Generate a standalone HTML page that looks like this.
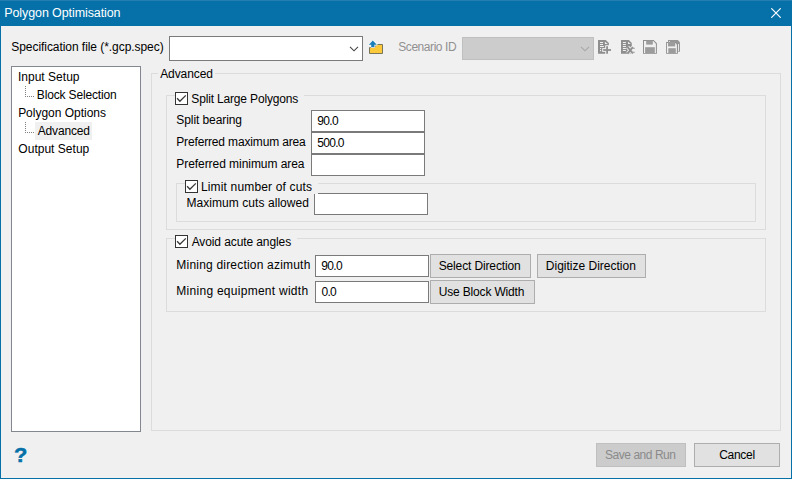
<!DOCTYPE html>
<html><head><meta charset="utf-8">
<style>
html,body{margin:0;padding:0;}
body{width:792px;height:479px;position:relative;overflow:hidden;background:#f0f0f0;font-family:"Liberation Sans",sans-serif;font-size:12px;color:#000;}
.abs{position:absolute;}
.t{position:absolute;white-space:nowrap;line-height:14px;font-size:12px;}
.in{position:absolute;background:#fff;border:1px solid #7a7a7a;box-sizing:border-box;}
.grp{position:absolute;border:1px solid #dcdcdc;box-sizing:border-box;}
.gap{position:absolute;background:#f0f0f0;height:3px;}
.cb{position:absolute;width:13px;height:13px;box-sizing:border-box;border:1px solid #333;background:#fff;}
.btn{position:absolute;box-sizing:border-box;border:1px solid #adadad;background:#e1e1e1;}
.dv{position:absolute;width:1px;background:repeating-linear-gradient(to bottom,#808080 0 1px,transparent 1px 2px);}
.dh{position:absolute;height:1px;background:repeating-linear-gradient(to right,#808080 0 1px,transparent 1px 2px);}
</style></head><body>
<div class="abs" style="left:0;top:0;width:792px;height:26px;background:#0571a8"></div>
<div class="abs" style="left:0;top:26px;width:1px;height:453px;background:#0571a8"></div>
<div class="abs" style="left:791px;top:26px;width:1px;height:453px;background:#0571a8"></div>
<div class="abs" style="left:0;top:478px;width:792px;height:1px;background:#0571a8"></div>
<div class="abs" style="left:0;top:0;width:792px;height:1px;background:#2480b2"></div>
<svg class="abs" style="left:771px;top:8px" width="10" height="10" viewBox="0 0 10 10"><path d="M0.3 0.3L9.7 9.7M9.7 0.3L0.3 9.7" stroke="#fff" stroke-width="1.15" fill="none"/></svg>

<!-- spec combobox -->
<div class="in" style="left:169px;top:36px;width:194px;height:25px">
<svg class="abs" style="left:179px;top:9px" width="10" height="6" viewBox="0 0 10 6"><path d="M1 0.8L5 4.8L9 0.8" stroke="#444" stroke-width="1.1" fill="none"/></svg>
</div>
<!-- folder icon -->
<svg class="abs" style="left:368px;top:40px" width="17" height="15" viewBox="0 0 17 15"><path d="M1.5 7.5H6.5L8.5 4.5H14.5V13.5H1.5Z" fill="#fcc93a" stroke="#7a7559" stroke-width="1"/><path d="M4.8 0.6L8.8 4.7H6.4V7H3.2V4.7H0.8Z" fill="#f8f8f8" stroke="#f8f8f8" stroke-width="1.6" stroke-linejoin="round"/><path d="M4.8 0.6L8.8 4.7H6.4V7H3.2V4.7H0.8Z" fill="#1a7fb8"/></svg>
<!-- scenario combobox -->
<div class="abs" style="left:462px;top:37px;width:132px;height:23px;background:#cccccc;border:1px solid #bfbfbf;box-sizing:border-box">
<svg class="abs" style="left:117px;top:8px" width="10" height="6" viewBox="0 0 10 6"><path d="M1 0.8L5 4.8L9 0.8" stroke="#a8a8a8" stroke-width="1.1" fill="none"/></svg>
</div>
<!-- toolbar icons -->
<svg class="abs" style="left:598px;top:40px" width="14" height="14" viewBox="0 0 14 14"><path d="M0 0H7.7L10.9 2.9V13.8H0Z" fill="#8e8e8e"/><path d="M6.9 1.8V3.9H9.9Z" fill="#ececec"/><g fill="#f0f0f0"><rect x="2" y="2" width="3" height="1"/><rect x="2" y="4" width="3" height="1"/><rect x="2" y="6" width="3.9" height="1"/><rect x="2" y="8" width="1.1" height="1.1"/><rect x="2" y="10" width="1.1" height="1.2"/><rect x="4.2" y="8.1" width="9.8" height="3.8"/><rect x="7.2" y="5.2" width="3.8" height="8.8"/></g><g fill="#8e8e8e"><rect x="5.2" y="9.1" width="7.8" height="1.8"/><rect x="8.2" y="6.2" width="1.8" height="7.5"/></g></svg>
<svg class="abs" style="left:621px;top:40px" width="15" height="15" viewBox="0 0 15 15"><path d="M0 0H7.9L10.8 3.1V13.8H0Z" fill="#8e8e8e"/><path d="M7 1.8V3.9H9.8Z" fill="#ececec"/><g fill="#f0f0f0"><rect x="1.9" y="2" width="3" height="1"/><rect x="1.9" y="4" width="3" height="1"/><rect x="1.9" y="6" width="3" height="1"/><rect x="1.9" y="8" width="3" height="1"/><rect x="1.9" y="10" width="3" height="1"/></g><path d="M6.6 7L11.9 13.4M11.9 7.2L6.6 13.4M11 8.3H13.6M11 12.3H13.6" stroke="#f0f0f0" stroke-width="3.6" fill="none"/><path d="M6.5 6.8L11.9 13.5M11.9 7.1L6.5 13.6" stroke="#8e8e8e" stroke-width="1.9" fill="none"/><path d="M11 8.3H13.8M11 12.3H13.8" stroke="#9a9a9a" stroke-width="1.1" fill="none"/></svg>
<svg class="abs" style="left:643px;top:40px" width="14" height="14" viewBox="0 0 14 14"><path d="M0 0H10.6L13.9 3.3V13.8H0Z" fill="#8e8e8e"/><path d="M1 1H10.2L12.9 3.7V12.9H1Z" fill="#f0f0f0"/><rect x="3.2" y="0.5" width="6.6" height="4.1" fill="#9c9c9c"/><rect x="2.1" y="7.2" width="9.7" height="6" fill="#9c9c9c"/></svg>
<svg class="abs" style="left:666px;top:40px" width="14" height="14" viewBox="0 0 14 14"><path d="M2 0H11.9L14 2.2V11.8H2Z" fill="#969696"/><rect x="3" y="1.1" width="0.9" height="0.9" fill="#f0f0f0"/><rect x="12" y="4" width="0.9" height="7.2" fill="#f0f0f0"/><path d="M0.1 2H9.8L11.9 4.2V13.8H0.1Z" fill="#8e8e8e"/><path d="M1 3H9.4L10.9 4.5V12.9H1Z" fill="#f0f0f0"/><rect x="2" y="2" width="7.2" height="4.4" fill="#9c9c9c"/><rect x="2.3" y="8.2" width="7.5" height="5" fill="#9c9c9c"/></svg>

<!-- tree -->
<div class="abs" style="left:11px;top:66px;width:130px;height:366px;background:#fff;border:1px solid #828790;box-sizing:border-box"></div>
<div class="abs" style="left:35px;top:122px;width:57px;height:18px;background:#f0f0f0"></div>
<div class="dv" style="left:25px;top:86px;height:11px"></div>
<div class="dh" style="left:25px;top:96px;width:9px"></div>
<div class="dv" style="left:25px;top:122px;height:11px"></div>
<div class="dh" style="left:25px;top:132px;width:9px"></div>

<!-- outer group -->
<div class="grp" style="left:151px;top:73px;width:630px;height:358px"></div>
<div class="gap" style="left:158px;top:72px;width:57px"></div>

<!-- group 1 -->
<div class="grp" style="left:166px;top:95px;width:600px;height:135px"></div>
<div class="gap" style="left:175px;top:94px;width:129px"></div>
<div class="cb" style="left:175px;top:92px"><svg class="abs" style="left:0;top:0" width="11" height="11" viewBox="0 0 11 11"><path d="M1.1 5.3L3.9 8.3L9.8 2.4" stroke="#383838" stroke-width="1.3" fill="none"/></svg></div>
<div class="in" style="left:311px;top:110px;width:114px;height:22px"></div>
<div class="in" style="left:311px;top:132px;width:114px;height:22px"></div>
<div class="in" style="left:311px;top:154px;width:114px;height:22px"></div>

<div class="grp" style="left:176px;top:183px;width:580px;height:39px"></div>
<div class="gap" style="left:185px;top:182px;width:133px"></div>
<div class="cb" style="left:185px;top:180px"><svg class="abs" style="left:0;top:0" width="11" height="11" viewBox="0 0 11 11"><path d="M1.1 5.3L3.9 8.3L9.8 2.4" stroke="#383838" stroke-width="1.3" fill="none"/></svg></div>
<div class="in" style="left:314px;top:193px;width:114px;height:22px"></div>
<div class="abs" style="left:314px;top:193px;width:4px;height:1px;background:#f0f0f0"></div>

<!-- group 2 -->
<div class="grp" style="left:166px;top:238px;width:600px;height:74px"></div>
<div class="gap" style="left:175px;top:237px;width:122px"></div>
<div class="cb" style="left:175px;top:235px"><svg class="abs" style="left:0;top:0" width="11" height="11" viewBox="0 0 11 11"><path d="M1.1 5.3L3.9 8.3L9.8 2.4" stroke="#383838" stroke-width="1.3" fill="none"/></svg></div>
<div class="in" style="left:315px;top:255px;width:114px;height:22px"></div>
<div class="in" style="left:315px;top:281px;width:114px;height:22px"></div>
<div class="btn" style="left:430px;top:254px;width:101px;height:24px"></div>
<div class="btn" style="left:537px;top:254px;width:109px;height:24px"></div>
<div class="btn" style="left:430px;top:280px;width:105px;height:24px"></div>

<!-- bottom -->
<div class="t" id="help" style="left:14.1px;top:443px;font-size:20px;line-height:24px;font-weight:bold;color:#0571a8;-webkit-text-stroke:0.5px #0571a8;transform:scaleX(1.09);transform-origin:0 0">?</div>
<div class="btn" style="left:596px;top:443px;width:90px;height:24px;background:#cccccc;border-color:#bfbfbf"></div>
<div class="btn" style="left:694px;top:443px;width:86px;height:24px"></div>
<div class="t" id="title" style="left:4.26px;top:6px;letter-spacing:-0.098px;font-size:12.5px;color:#fff;">Polygon Optimisation</div>
<div class="t" id="spec" style="left:11.28px;top:40px;letter-spacing:-0.056px;">Specification file (*.gcp.spec)</div>
<div class="t" id="scen" style="left:398.26px;top:40px;letter-spacing:-0.439px;color:#909090;">Scenario ID</div>
<div class="t" id="tr1" style="left:17.92px;top:70px;letter-spacing:0.022px;">Input Setup</div>
<div class="t" id="tr2" style="left:36.87px;top:88px;letter-spacing:-0.165px;">Block Selection</div>
<div class="t" id="tr3" style="left:18.13px;top:106px;letter-spacing:-0.013px;">Polygon Options</div>
<div class="t" id="tr4" style="left:37.71px;top:124px;letter-spacing:-0.151px;">Advanced</div>
<div class="t" id="tr5" style="left:18.36px;top:142px;letter-spacing:0.015px;">Output Setup</div>
<div class="t" id="gadv" style="left:160.16px;top:67px;letter-spacing:-0.089px;">Advanced</div>
<div class="t" id="split" style="left:191.37px;top:92px;letter-spacing:-0.168px;">Split Large Polygons</div>
<div class="t" id="sbear" style="left:176.37px;top:113px;letter-spacing:-0.087px;">Split bearing</div>
<div class="t" id="pmax" style="left:176.26px;top:135px;letter-spacing:-0.153px;">Preferred maximum area</div>
<div class="t" id="pmin" style="left:176.26px;top:157px;letter-spacing:-0.052px;">Preferred minimum area</div>
<div class="t" id="limit" style="left:200.91px;top:180px;letter-spacing:0.162px;">Limit number of cuts</div>
<div class="t" id="maxc" style="left:186.40px;top:196px;letter-spacing:0.065px;">Maximum cuts allowed</div>
<div class="t" id="avoid" style="left:191.63px;top:235px;letter-spacing:-0.099px;">Avoid acute angles</div>
<div class="t" id="mdir" style="left:176.37px;top:258px;letter-spacing:0.198px;">Mining direction azimuth</div>
<div class="t" id="meq" style="left:176.37px;top:284px;letter-spacing:0.269px;">Mining equipment width</div>
<div class="t" id="v1" style="left:317.14px;top:114px;letter-spacing:-0.576px;">90.0</div>
<div class="t" id="v2" style="left:317.25px;top:136px;letter-spacing:-0.703px;">500.0</div>
<div class="t" id="v3" style="left:321.33px;top:259px;letter-spacing:-0.694px;">90.0</div>
<div class="t" id="v4" style="left:321.47px;top:285px;letter-spacing:-0.763px;">0.0</div>
<div class="t" id="bsel" style="left:438.64px;top:259px;letter-spacing:-0.129px;">Select Direction</div>
<div class="t" id="bdig" style="left:545.87px;top:259px;letter-spacing:-0.004px;">Digitize Direction</div>
<div class="t" id="bblk" style="left:438.64px;top:285px;letter-spacing:-0.156px;">Use Block Width</div>
<div class="t" id="bsave" style="left:605.02px;top:448px;letter-spacing:-0.460px;color:#8a8a8a;">Save and Run</div>
<div class="t" id="bcan" style="left:719.22px;top:448px;letter-spacing:-0.291px;">Cancel</div>
</body></html>
